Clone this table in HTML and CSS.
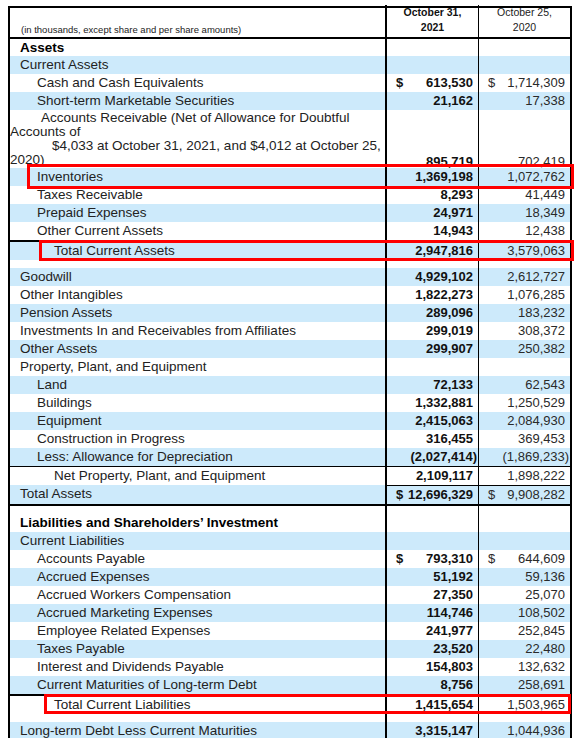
FILE: index.html
```html
<!DOCTYPE html>
<html lang="en">

<head>
    <meta charset="UTF-8">
    <meta name="viewport" content="width=device-width, initial-scale=1.0">
    <title>Balance Sheet</title>
    <link rel="stylesheet" href="styles.css">
</head>

<body>

    <div class="sheet">
        <!-- column headings -->
        <div class="row head">
            <div class="cell label note">(in thousands, except share and per share amounts)</div>
            <div class="cell v date cur">October 31,<br>2021</div>
            <div class="cell v v2 date">October 25,<br>2020</div>
        </div>

        <div class="row first">
            <div class="cell label section">Assets</div>
            <div class="cell v"></div>
            <div class="cell v v2"></div>
        </div>
        <div class="row blue">
            <div class="cell label">Current Assets</div>
            <div class="cell v"></div>
            <div class="cell v v2"></div>
        </div>
        <div class="row">
            <div class="cell label in1">Cash and Cash Equivalents</div>
            <div class="cell v cur dollar"><span>$</span><span>613,530</span></div>
            <div class="cell v v2 dollar"><span>$</span><span>1,714,309</span></div>
        </div>
        <div class="row blue">
            <div class="cell label in1">Short-term Marketable Securities</div>
            <div class="cell v cur">21,162</div>
            <div class="cell v v2">17,338</div>
        </div>
        <div class="row tall">
            <div class="cell label wrap">
                <span class="ln ln-a">Accounts Receivable (Net of Allowance for Doubtful</span>
                <span class="ln">Accounts of</span>
                <span class="ln ln-b">$4,033 at October 31, 2021, and $4,012 at October 25,</span>
                <span class="ln">2020)</span>
            </div>
            <div class="cell v cur bottom">895,719</div>
            <div class="cell v v2 bottom">702,419</div>
        </div>
        <div class="row blue">
            <div class="cell label in1">Inventories</div>
            <div class="cell v cur">1,369,198</div>
            <div class="cell v v2">1,072,762</div>
        </div>
        <div class="row">
            <div class="cell label in1">Taxes Receivable</div>
            <div class="cell v cur">8,293</div>
            <div class="cell v v2">41,449</div>
        </div>
        <div class="row blue">
            <div class="cell label in1">Prepaid Expenses</div>
            <div class="cell v cur">24,971</div>
            <div class="cell v v2">18,349</div>
        </div>
        <div class="row">
            <div class="cell label in1">Other Current Assets</div>
            <div class="cell v cur">14,943</div>
            <div class="cell v v2">12,438</div>
        </div>
        <div class="row blue rule">
            <div class="cell label in2">Total Current Assets</div>
            <div class="cell v cur">2,947,816</div>
            <div class="cell v v2">3,579,063</div>
        </div>
        <div class="row gap">
            <div class="cell label"></div>
            <div class="cell v"></div>
            <div class="cell v v2"></div>
        </div>

        <div class="row blue">
            <div class="cell label">Goodwill</div>
            <div class="cell v cur">4,929,102</div>
            <div class="cell v v2">2,612,727</div>
        </div>
        <div class="row">
            <div class="cell label">Other Intangibles</div>
            <div class="cell v cur">1,822,273</div>
            <div class="cell v v2">1,076,285</div>
        </div>
        <div class="row blue">
            <div class="cell label">Pension Assets</div>
            <div class="cell v cur">289,096</div>
            <div class="cell v v2">183,232</div>
        </div>
        <div class="row">
            <div class="cell label">Investments In and Receivables from Affiliates</div>
            <div class="cell v cur">299,019</div>
            <div class="cell v v2">308,372</div>
        </div>
        <div class="row blue">
            <div class="cell label">Other Assets</div>
            <div class="cell v cur">299,907</div>
            <div class="cell v v2">250,382</div>
        </div>
        <div class="row">
            <div class="cell label">Property, Plant, and Equipment</div>
            <div class="cell v"></div>
            <div class="cell v v2"></div>
        </div>
        <div class="row blue">
            <div class="cell label in1">Land</div>
            <div class="cell v cur">72,133</div>
            <div class="cell v v2">62,543</div>
        </div>
        <div class="row">
            <div class="cell label in1">Buildings</div>
            <div class="cell v cur">1,332,881</div>
            <div class="cell v v2">1,250,529</div>
        </div>
        <div class="row blue">
            <div class="cell label in1">Equipment</div>
            <div class="cell v cur">2,415,063</div>
            <div class="cell v v2">2,084,930</div>
        </div>
        <div class="row">
            <div class="cell label in1">Construction in Progress</div>
            <div class="cell v cur">316,455</div>
            <div class="cell v v2">369,453</div>
        </div>
        <div class="row blue">
            <div class="cell label in1">Less: Allowance for Depreciation</div>
            <div class="cell v cur neg">(2,027,414)</div>
            <div class="cell v v2 neg">(1,869,233)</div>
        </div>
        <div class="row thin">
            <div class="cell label in2">Net Property, Plant, and Equipment</div>
            <div class="cell v cur">2,109,117</div>
            <div class="cell v v2">1,898,222</div>
        </div>
        <div class="row blue sum">
            <div class="cell label">Total Assets</div>
            <div class="cell v cur dollar"><span>$</span><span>12,696,329</span></div>
            <div class="cell v v2 dollar"><span>$</span><span>9,908,282</span></div>
        </div>

        <div class="row gap">
            <div class="cell label"></div>
            <div class="cell v"></div>
            <div class="cell v v2"></div>
        </div>
        <div class="row">
            <div class="cell label section">Liabilities and Shareholders’ Investment</div>
            <div class="cell v"></div>
            <div class="cell v v2"></div>
        </div>
        <div class="row blue">
            <div class="cell label">Current Liabilities</div>
            <div class="cell v"></div>
            <div class="cell v v2"></div>
        </div>
        <div class="row">
            <div class="cell label in1">Accounts Payable</div>
            <div class="cell v cur dollar"><span>$</span><span>793,310</span></div>
            <div class="cell v v2 dollar"><span>$</span><span>644,609</span></div>
        </div>
        <div class="row blue">
            <div class="cell label in1">Accrued Expenses</div>
            <div class="cell v cur">51,192</div>
            <div class="cell v v2">59,136</div>
        </div>
        <div class="row">
            <div class="cell label in1">Accrued Workers Compensation</div>
            <div class="cell v cur">27,350</div>
            <div class="cell v v2">25,070</div>
        </div>
        <div class="row blue">
            <div class="cell label in1">Accrued Marketing Expenses</div>
            <div class="cell v cur">114,746</div>
            <div class="cell v v2">108,502</div>
        </div>
        <div class="row">
            <div class="cell label in1">Employee Related Expenses</div>
            <div class="cell v cur">241,977</div>
            <div class="cell v v2">252,845</div>
        </div>
        <div class="row blue">
            <div class="cell label in1">Taxes Payable</div>
            <div class="cell v cur">23,520</div>
            <div class="cell v v2">22,480</div>
        </div>
        <div class="row">
            <div class="cell label in1">Interest and Dividends Payable</div>
            <div class="cell v cur">154,803</div>
            <div class="cell v v2">132,632</div>
        </div>
        <div class="row blue">
            <div class="cell label in1">Current Maturities of Long-term Debt</div>
            <div class="cell v cur">8,756</div>
            <div class="cell v v2">258,691</div>
        </div>
        <div class="row rule">
            <div class="cell label in2">Total Current Liabilities</div>
            <div class="cell v cur">1,415,654</div>
            <div class="cell v v2">1,503,965</div>
        </div>
        <div class="row gap">
            <div class="cell label"></div>
            <div class="cell v"></div>
            <div class="cell v v2"></div>
        </div>
        <div class="row blue">
            <div class="cell label">Long-term Debt Less Current Maturities</div>
            <div class="cell v cur">3,315,147</div>
            <div class="cell v v2">1,044,936</div>
        </div>

        <!-- red highlight frames drawn over the sheet -->
        <div class="mark mark-inv"></div>
        <div class="mark mark-tca"></div>
        <div class="mark mark-tcl"></div>
    </div>

</body>

</html>
```

FILE: styles.css
```css
* {
    box-sizing: border-box;
    margin: 0;
    padding: 0;
}

body {
    width: 581px;
    height: 738px;
    overflow: hidden;
    background-color: #ffffff;
    font-family: 'Liberation Sans', Arial, sans-serif;
    color: #1c1c1c;
}

.sheet {
    position: relative;
    width: 564px;
    margin: 6px 0 0 8px;
    border: 2px solid #000;
    border-bottom: none;
    font-size: 13px;
}

.row {
    display: grid;
    grid-template-columns: 375px 93px 92px;
    height: 18px;
    line-height: 18px;
}

.row.blue {
    background-color: #cdeafb;
}

.cell {
    white-space: nowrap;
    overflow: hidden;
}

.label {
    padding-left: 10px;
    font-size: 13.5px;
    color: #222;
}

.label.in1 {
    padding-left: 27px;
}

.label.in2 {
    padding-left: 44px;
}

.section {
    font-weight: 700;
    color: #000;
}

.v {
    border-left: 2px solid #000;
    text-align: right;
    padding-right: 5px;
    color: #2a2a2a;
}

.v.v2 {
    border-left-width: 1px;
}

.v.cur {
    font-weight: 700;
    color: #111;
}

.v.neg {
    padding-right: 1px;
}

.dollar {
    display: flex;
    justify-content: space-between;
    padding-left: 9px;
}

/* header */
.row.head {
    height: 31px;
    border-bottom: 2px solid #000;
}

.note {
    font-size: 9.5px;
    line-height: 12px;
    padding-left: 11px;
    padding-top: 16px;
}

.date {
    text-align: center;
    padding-right: 0;
    font-size: 10.5px;
    line-height: 15px;
    margin-top: -3px;
    height: 32px;
    font-weight: 400;
    color: #222;
}

.date.cur {
    font-weight: 700;
}

.row.first {
    height: 17px;
    line-height: 17px;
}

/* accounts receivable, wraps onto four lines */
.row.tall {
    height: 58px;
}

.wrap {
    padding-left: 0;
    padding-top: 1px;
    line-height: 14px;
}

.ln {
    display: block;
}

.ln-a {
    padding-left: 31px;
}

.ln-b {
    padding-left: 42px;
}

.bottom {
    display: flex;
    align-items: flex-end;
    justify-content: flex-end;
    line-height: 16px;
    margin-bottom: -2px;
}

/* rules above and below totals */
.row.rule {
    height: 20px;
    border-top: 2px solid #000;
}

.row.thin {
    height: 19px;
    border-top: 1px solid #000;
}

.row.sum {
    height: 21px;
    border-bottom: 2px solid #000;
}

.row.sum .v {
    border-top: 1px solid #000;
}

.row.gap {
    height: 8px;
}

/* red highlight frames */
.mark {
    position: absolute;
    border: 3px solid #f00;
}

.mark-inv {
    left: 17px;
    top: 156px;
    width: 547px;
    height: 25px;
}

.mark-tca {
    left: 29px;
    top: 232px;
    width: 535px;
    height: 21px;
}

.mark-tcl {
    left: 34px;
    top: 686px;
    width: 527px;
    height: 20px;
}
```
